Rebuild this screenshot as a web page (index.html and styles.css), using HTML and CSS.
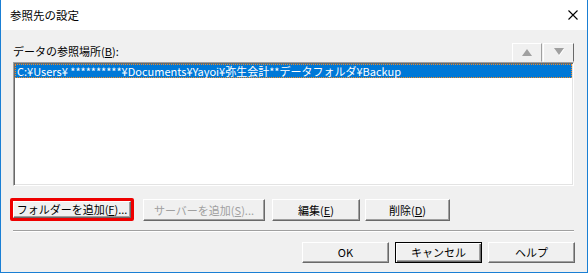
FILE: index.html
```html
<!DOCTYPE html>
<html lang="ja">
  <head>
    <meta charset="UTF-8" />
    <title>参照先の設定</title>
    <link rel="stylesheet" href="styles.css">
  </head>
  <body>
    <div class="dialog">
      <div class="titlebar">
        <span class="title">参照先の設定</span>
        <svg class="close" width="10" height="10" viewBox="0 0 10 10">
          <path d="M0.5 0.5 L9.5 9.5 M9.5 0.5 L0.5 9.5" stroke="#000" stroke-width="1.1" fill="none" />
        </svg>
      </div>

      <div class="dialog-body">
        <div class="list-head">
          <span class="label">データの参照場所(<u>B</u>):</span>
          <div class="order">
            <button class="btn arrow" disabled>
              <svg width="12" height="8" viewBox="0 0 12 8"><path d="M6 0 L11 7 L1 7 Z" fill="#a0a0a0" /></svg>
            </button>
            <button class="btn arrow arrow-down" disabled>
              <svg width="12" height="9" viewBox="0 0 12 9"><path d="M1.5 1 L11.5 1 L6.5 8 Z" fill="#fff" /><path d="M1 0 L11 0 L6 7 Z" fill="#a0a0a0" /></svg>
            </button>
          </div>
        </div>

        <div class="listbox">
          <div class="item selected">C:¥Users¥ **********¥Documents¥Yayoi¥弥生会計**データフォルダ¥Backup</div>
        </div>

        <div class="actions">
          <span class="highlight">
            <button class="btn">フォルダーを追加(<u>F</u>)...</button>
          </span>
          <button class="btn btn-server" disabled>サーバーを追加(<u>S</u>)...</button>
          <button class="btn btn-edit">編集(<u>E</u>)</button>
          <button class="btn btn-delete">削除(<u>D</u>)</button>
        </div>

        <div class="separator"></div>

        <div class="footer">
          <button class="btn">OK</button>
          <button class="btn default">キャンセル</button>
          <button class="btn">ヘルプ</button>
        </div>
      </div>
    </div>
  </body>
</html>
```

FILE: styles.css
```css
/* Page */
body {
  margin: 0;
  font-family: "Noto Sans CJK JP", "Liberation Sans", sans-serif;
  font-size: 11px;
  color: #000;
  background: #fff;
}

.dialog {
  width: 588px;
  height: 273px;
  box-sizing: border-box;
  border: 1px solid #1a7fd4;
  border-top: none;
  display: flex;
  flex-direction: column;
}

/* Title bar */
.titlebar {
  height: 30px;
  background: #fff;
  display: flex;
  align-items: center;
  justify-content: space-between;
  padding: 0 9px 0 9px;
}

.title {
  font-size: 11.5px;
  line-height: 14px;
}

.close {
  display: block;
}

/* Body */
.dialog-body {
  flex: 1;
  background: #f0f0f0;
  padding: 13px 12px 0 12px;
}

.list-head {
  display: flex;
  justify-content: space-between;
  align-items: flex-start;
  height: 19px;
}

.label {
  line-height: 15px;
  margin-top: 1px;
}

.order {
  display: flex;
  margin-right: 1px;
}

/* Buttons */
.btn {
  font-family: inherit;
  font-size: 11px;
  color: #000;
  background: #f0f0f0;
  border: 1px solid;
  border-color: #fff #696969 #696969 #fff;
  box-shadow: inset -1px -1px #a0a0a0;
  border-radius: 0;
  padding: 0;
  margin: 0;
  height: 22px;
  line-height: 18px;
  box-sizing: border-box;
}

.btn:disabled {
  color: #a0a0a0;
}

.btn u {
  text-underline-offset: 1px;
}

.arrow {
  width: 30px;
  height: 19px;
  display: flex;
  align-items: center;
  justify-content: center;
  border-color: #fff #a0a0a0 #f0f0f0 #fff;
  box-shadow: none;
}

.arrow svg {
  display: block;
}

.arrow-down {
  width: 31px;
  margin-left: 1px;
  border-right-color: #696969;
}

/* List */
.listbox {
  height: 124px;
  margin-right: 1px;
  box-sizing: border-box;
  background: #fff;
  border: 1px solid;
  border-color: #a0a0a0 #fff #fff #a0a0a0;
  box-shadow: inset 1px 1px #696969, inset -1px -1px #e3e3e3;
  padding: 1px;
}

.item {
  height: 14px;
  line-height: 12px;
  padding-left: 1px;
  white-space: nowrap;
  box-sizing: border-box;
}

.item.selected {
  background: #0078d7;
  color: #fff;
  border: 1px dotted #f08a24;
}

/* Action row */
.actions {
  display: flex;
  align-items: center;
  margin-top: 12px;
  height: 23px;
}

.highlight {
  display: flex;
  width: 124px;
  height: 23px;
  box-sizing: border-box;
  margin-left: -3px;
  border: 3px solid #ee0000;
  border-radius: 2px;
}

.highlight .btn {
  width: 100%;
  height: 100%;
  line-height: 15px;
}

.btn-server {
  width: 122px;
  margin-left: 9px;
}

.btn-edit {
  width: 88px;
  margin-left: 7px;
}

.btn-delete {
  width: 85px;
  margin-left: 5px;
}

.separator {
  margin-top: 9px;
  margin-right: 1px;
  height: 2px;
  box-sizing: border-box;
  border-top: 1px solid #a0a0a0;
  border-bottom: 1px solid #fff;
}

/* Footer */
.footer {
  display: flex;
  justify-content: flex-end;
  gap: 6px;
  margin-top: 10px;
}

.footer .btn {
  width: 87px;
  height: 21px;
  line-height: 17px;
}

.footer .default {
  border: 1px solid #000;
  box-shadow: inset 1px 1px #fff, inset -1px -1px #696969, inset -2px -2px #a0a0a0;
}
```
